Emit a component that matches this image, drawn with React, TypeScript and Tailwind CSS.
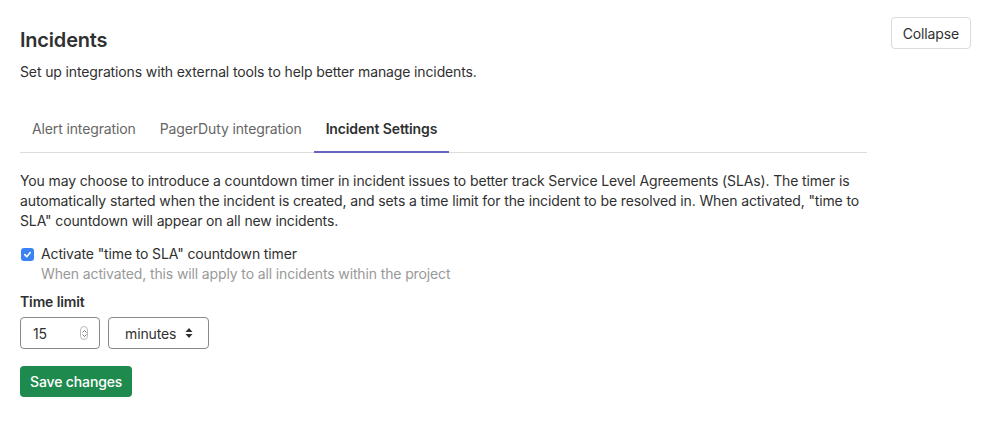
import React from "react";

export default function App() {
  return (
    <div
      className="w-[999px] h-[426px] bg-white text-[#303030] overflow-hidden tracking-[-0.13px]"
      style={{ fontFamily: "Inter, 'Noto Sans', sans-serif" }}
    >
      <div className="flex pl-5 pr-[28px]">
        <div className="w-[847px]">
          <h4 className="text-[20px] font-semibold leading-6 mt-[28px] tracking-[-0.2px]">Incidents</h4>
          <p className="text-[14px] leading-5 mt-[10px]">
            Set up integrations with external tools to help better manage incidents.
          </p>
          <div className="flex mt-[32px] border-b border-[#dbdbdb] text-[14px]">
            <div className="px-3 pb-[12px] pt-[4px] text-[#666] border-b-2 border-transparent -mb-px">Alert integration</div>
            <div className="px-3 pb-[12px] pt-[4px] text-[#666] border-b-2 border-transparent -mb-px">PagerDuty integration</div>
            <div className="px-3 pb-[12px] pt-[4px] font-semibold text-[#303030] border-b-2 border-[#6666c4] -mb-px">Incident Settings</div>
          </div>
          <p className="text-[14px] leading-5 mt-[18px]">
            You may choose to introduce a countdown timer in incident issues to better track Service Level Agreements (SLAs). The timer is automatically started when the incident is created, and sets a time limit for the incident to be resolved in. When activated, "time to SLA" countdown will appear on all new incidents.
          </p>
          <div className="flex mt-[13px] text-[14px] leading-5">
            <div className="w-[13px] h-[13px] mt-[4px] ml-[1px] rounded-[3px] bg-[#3b82f6] flex items-center justify-center">
              <svg width="9" height="9" viewBox="0 0 10 10">
                <path d="M2 5.2 L4.2 7.4 L8 2.8" fill="none" stroke="white" strokeWidth="1.8" strokeLinecap="round" strokeLinejoin="round" />
              </svg>
            </div>
            <div className="ml-[7px]">
              <div>Activate "time to SLA" countdown timer</div>
              <div className="text-[#999]">When activated, this will apply to all incidents within the project</div>
            </div>
          </div>
          <div className="text-[14px] font-semibold leading-5 mt-[8px]">Time limit</div>
          <div className="flex gap-2 mt-[5px] text-[14px]">
            <div className="w-[80px] h-[32px] border border-[#898989] rounded-[4px] flex items-center pl-3 pr-[11px] justify-between">
              <span>15</span>
              <div className="w-[8px] h-[14px] border border-[#bbb] rounded-full flex flex-col items-center justify-center gap-[1px]">
                <svg width="5" height="3" viewBox="0 0 5 3"><path d="M0.5 2.5 L2.5 0.5 L4.5 2.5" fill="none" stroke="#555" strokeWidth="0.8" /></svg>
                <svg width="5" height="3" viewBox="0 0 5 3"><path d="M0.5 0.5 L2.5 2.5 L4.5 0.5" fill="none" stroke="#555" strokeWidth="0.8" /></svg>
              </div>
            </div>
            <div className="w-[101px] h-[32px] border border-[#898989] rounded-[4px] flex items-center pl-4 pr-[15px] justify-between">
              <span>minutes</span>
              <svg width="8" height="12" viewBox="0 0 8 12">
                <path d="M0.5 5 L4 1 L7.5 5 Z" fill="#303030" />
                <path d="M0.5 7 L4 11 L7.5 7 Z" fill="#303030" />
              </svg>
            </div>
          </div>
          <button className="mt-[17px] h-[31px] px-[10px] rounded-[4px] bg-[#1f8a4d] text-white text-[14px] font-medium">
            Save changes
          </button>
        </div>
        <div className="flex-1 flex justify-end">
          <button className="mt-[17px] h-[32px] px-[11px] rounded-[4px] border border-[#dbdbdb] text-[14px] text-[#303030] bg-white">
            Collapse
          </button>
        </div>
      </div>
    </div>
  );
}
